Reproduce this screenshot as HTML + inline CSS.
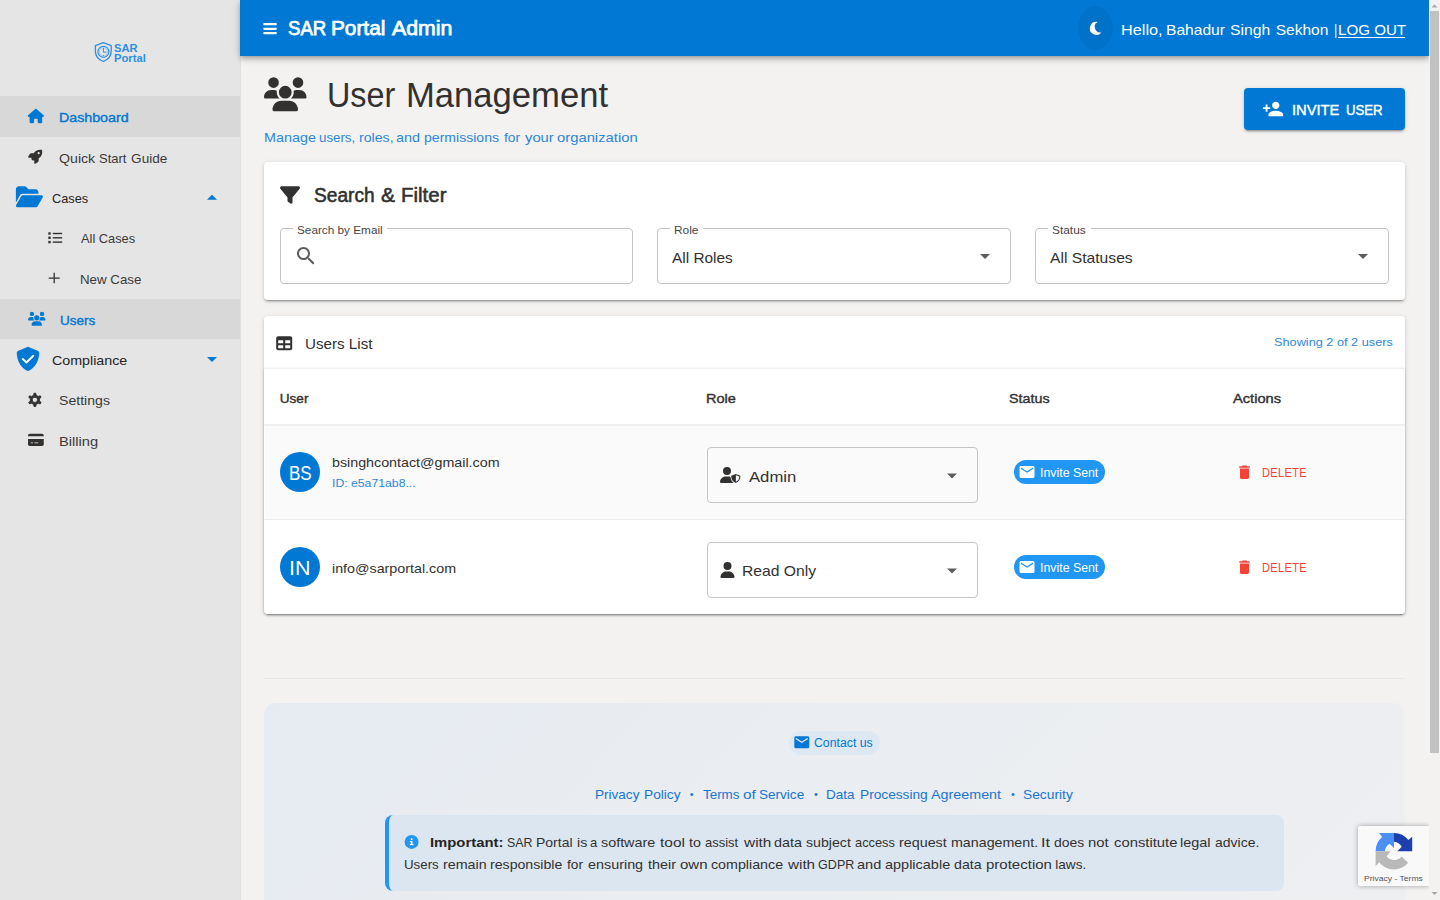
<!DOCTYPE html>
<html lang="en">
<head>
<meta charset="utf-8">
<title>SAR Portal Admin - User Management</title>
<style>
*{box-sizing:border-box;margin:0;padding:0}
html,body{width:1440px;height:900px;overflow:hidden}
body{position:relative;background:#f3f2f1;font-family:"Liberation Sans",sans-serif;color:#323130;font-size:13.58px}
.abs{position:absolute}
.ln{position:absolute;left:0;top:0;line-height:1}
.t{position:absolute;white-space:nowrap;line-height:1;transform-origin:0 0}
svg{position:absolute;display:block;overflow:visible}
a{color:inherit;text-decoration:none}

/* sidebar */
#side{position:absolute;left:0;top:0;width:241px;height:900px;background:#e5e5e5;border-right:1px solid #e1e1e1}
.hl{position:absolute;left:0;width:240px;height:40.6px;background:#d8d8d8}
.nav{font-size:13.58px;color:#3b3a39}
.navb{font-size:13.58px;color:#0078d4;-webkit-text-stroke:.4px #0078d4}
.navg{font-size:13.58px;color:#252423}

/* header */
#bar{position:absolute;left:240px;top:0;width:1189px;height:56px;background:#0078d4;box-shadow:0 2px 4px -1px rgba(0,0,0,.2),0 4px 5px 0 rgba(0,0,0,.14),0 1px 10px 0 rgba(0,0,0,.12)}
#moonbg{position:absolute;left:1078px;top:6px;width:35px;height:44px;border-radius:50%;background:rgba(0,0,0,.045)}

/* cards */
.card{position:absolute;background:#fff;border-radius:4px;box-shadow:0 3px 1px -2px rgba(0,0,0,.2),0 2px 2px 0 rgba(0,0,0,.14),0 1px 5px 0 rgba(0,0,0,.12)}
.field{position:absolute;top:228px;height:56px;border:1px solid #c4c4c4;border-radius:4px;background:#fff}
.notch{position:absolute;top:227px;height:3px;background:#fff}
.lb{font-size:11.64px;color:#484644}
.val{font-size:15.52px;color:#323130}
.th{font-size:13.58px;color:#323130;-webkit-text-stroke:.4px #323130}
.sel{position:absolute;left:707px;width:271px;height:56px;border:1px solid #c4c4c4;border-radius:4px}
.av{position:absolute;left:280px;width:40px;height:40px;border-radius:50%;background:#0078d4}
.chip{position:absolute;left:1014px;width:91px;height:24px;border-radius:12px;background:#2196f3}
.hr{position:absolute;height:1px;background:#e7e6e5}
.blue{color:#2e87d9}
.link{font-size:13.58px;color:#1976d2}
.dot{font-size:11px;color:#1976d2}
/*AUTO*/
#lg1{left:113.83px;top:43px;transform:scaleX(0.9696)}
#lg2{left:113.83px;top:53px;transform:scaleX(0.9742)}
#n1{left:59.45px;top:111px;transform:scaleX(1.0477)}
#n3{left:51.56px;top:192px;transform:scaleX(0.9378)}
#n4{left:80.50px;top:232px;transform:scaleX(0.9439)}
#n5{left:79.52px;top:273px;transform:scaleX(0.9803)}
#n6{left:59.51px;top:314px;transform:scaleX(0.9941)}
#n7{left:52.25px;top:354px;transform:scaleX(1.0500)}
#n8{left:59.46px;top:394px;transform:scaleX(1.0383)}
#n9{left:59.42px;top:435px;transform:scaleX(1.0824)}
#h3{left:1337.53px;top:22px;transform:scaleX(0.9750)}
#l1{left:296.99px;top:224px;transform:scaleX(1.0120)}
#l2{left:674.48px;top:224px;transform:scaleX(1.0227)}
#l3{left:1051.98px;top:224px;transform:scaleX(1.0234)}
#v1{left:672.00px;top:250px;transform:scaleX(0.9918)}
#v2{left:1049.50px;top:250px;transform:scaleX(1.0093)}
#ul{left:304.52px;top:336px;transform:scaleX(0.9779)}
#sh{left:1274.11px;top:336px;transform:scaleX(1.0944)}
#th1{left:279.75px;top:392px;transform:scaleX(1.0000)}
#th2{left:705.68px;top:392px;transform:scaleX(1.0673)}
#th3{left:1009.45px;top:392px;transform:scaleX(1.0541)}
#th4{left:1233.00px;top:392px;transform:scaleX(1.0795)}
#a1{left:288.64px;top:464px;transform:scaleX(0.8783)}
#a2{left:289.19px;top:559px;transform:scaleX(1.1063)}
#e1{left:332.15px;top:456px;transform:scaleX(1.0506)}
#i1{left:332.15px;top:477px;transform:scaleX(1.0519)}
#e2{left:332.15px;top:562px;transform:scaleX(1.0517)}
#r1{left:749.00px;top:469px;transform:scaleX(1.0744)}
#r2{left:741.99px;top:563px;transform:scaleX(1.0104)}
#c1{left:1039.77px;top:467px;transform:scaleX(0.9784)}
#c2{left:1039.77px;top:562px;transform:scaleX(0.9784)}
#d1{left:1261.93px;top:467px;transform:scaleX(0.8700)}
#d2{left:1261.93px;top:562px;transform:scaleX(0.8700)}
#cu{left:814.03px;top:737px;transform:scaleX(0.9746)}
#f4{left:1022.99px;top:788px;transform:scaleX(1.0146)}
#im{left:429.91px;top:836px;transform:scaleX(1.0923)}
#rc{left:1364.23px;top:875px;transform:scaleX(1.0698)}
#psw0{left:263.94px;top:131px;transform:scaleX(1.0574)}
#psw1{left:319.02px;top:131px;transform:scaleX(0.9771)}
#psw2{left:358.66px;top:131px;transform:scaleX(1.0419)}
#psw3{left:395.94px;top:131px;transform:scaleX(1.0571)}
#psw4{left:424.16px;top:131px;transform:scaleX(1.0352)}
#psw5{left:503.80px;top:131px;transform:scaleX(1.0125)}
#psw6{left:525.00px;top:131px;transform:scaleX(1.0885)}
#psw7{left:556.91px;top:131px;transform:scaleX(1.0903)}
#p1w0{left:507.09px;top:836px;transform:scaleX(0.9115)}
#p1w1{left:536.47px;top:836px;transform:scaleX(1.0294)}
#p1w2{left:576.75px;top:836px;transform:scaleX(1.0500)}
#p1w3{left:590.23px;top:836px;transform:scaleX(0.9667)}
#p1w4{left:601.14px;top:836px;transform:scaleX(1.0560)}
#p1w5{left:660.30px;top:836px;transform:scaleX(1.1381)}
#p1w6{left:689.20px;top:836px;transform:scaleX(1.0545)}
#p1w7{left:705.35px;top:836px;transform:scaleX(0.9529)}
#p1w8{left:744.20px;top:836px;transform:scaleX(1.1348)}
#p1w9{left:774.24px;top:836px;transform:scaleX(1.0560)}
#p1w10{left:805.96px;top:836px;transform:scaleX(1.0429)}
#p1w11{left:855.36px;top:836px;transform:scaleX(0.9439)}
#p1w12{left:899.25px;top:836px;transform:scaleX(1.0545)}
#p1w13{left:950.95px;top:836px;transform:scaleX(1.0494)}
#p1w14{left:1041.30px;top:836px;transform:scaleX(1.2000)}
#p1w15{left:1053.97px;top:836px;transform:scaleX(1.0250)}
#p1w16{left:1088.41px;top:836px;transform:scaleX(1.0944)}
#p1w17{left:1113.61px;top:836px;transform:scaleX(1.0911)}
#p1w18{left:1180.24px;top:836px;transform:scaleX(1.0630)}
#p1w19{left:1214.77px;top:836px;transform:scaleX(1.0293)}
#p2w0{left:404.02px;top:858px;transform:scaleX(0.9794)}
#p2w1{left:442.65px;top:858px;transform:scaleX(1.0525)}
#p2w2{left:490.16px;top:858px;transform:scaleX(1.0412)}
#p2w3{left:567.20px;top:858px;transform:scaleX(1.0062)}
#p2w4{left:587.74px;top:858px;transform:scaleX(1.0580)}
#p2w5{left:647.50px;top:858px;transform:scaleX(1.0577)}
#p2w6{left:679.70px;top:858px;transform:scaleX(1.1043)}
#p2w7{left:710.65px;top:858px;transform:scaleX(1.0493)}
#p2w8{left:787.50px;top:858px;transform:scaleX(1.1217)}
#p2w9{left:817.77px;top:858px;transform:scaleX(0.9270)}
#p2w10{left:857.23px;top:858px;transform:scaleX(1.0714)}
#p2w11{left:885.23px;top:858px;transform:scaleX(1.0661)}
#p2w12{left:953.66px;top:858px;transform:scaleX(1.0440)}
#p2w13{left:985.59px;top:858px;transform:scaleX(1.1052)}
#p2w14{left:1055.30px;top:858px;transform:scaleX(1.0000)}
#h1w0{left:287.80px;top:19px;transform:scaleX(0.9539)}
#h1w1{left:331.43px;top:19px;transform:scaleX(1.0663)}
#h1w2{left:391.90px;top:19px;transform:scaleX(1.0909)}
#h2w0{left:1120.55px;top:22px;transform:scaleX(1.0486)}
#h2w1{left:1166.29px;top:22px;transform:scaleX(1.0053)}
#h2w2{left:1230.49px;top:22px;transform:scaleX(1.0132)}
#h2w3{left:1275.70px;top:22px;transform:scaleX(1.0000)}
#h2w4{left:1334.20px;top:22px;transform:scaleX(0.8000)}
#ptw0{left:327.19px;top:78px;transform:scaleX(0.9362)}
#ptw1{left:406.19px;top:78px;transform:scaleX(1.0035)}
#sfw0{left:313.61px;top:186px;transform:scaleX(0.9858)}
#sfw1{left:380.52px;top:186px;transform:scaleX(1.0833)}
#sfw2{left:401.35px;top:186px;transform:scaleX(1.0548)}
#invtw0{left:1292.15px;top:102px;transform:scaleX(0.9469)}
#invtw1{left:1345.95px;top:102px;transform:scaleX(0.8500)}
#n2w0{left:59.36px;top:152px;transform:scaleX(1.0424)}
#n2w1{left:99.04px;top:152px;transform:scaleX(0.9571)}
#n2w2{left:131.10px;top:152px;transform:scaleX(1.0000)}
#f1w0{left:595.30px;top:788px;transform:scaleX(0.9977)}
#f1w1{left:643.69px;top:788px;transform:scaleX(1.0086)}
#f2w0{left:702.50px;top:788px;transform:scaleX(0.9861)}
#f2w1{left:742.57px;top:788px;transform:scaleX(1.1300)}
#f2w2{left:759.30px;top:788px;transform:scaleX(0.9977)}
#f3w0{left:825.91px;top:788px;transform:scaleX(0.9929)}
#f3w1{left:859.59px;top:788px;transform:scaleX(1.0077)}
#f3w2{left:931.40px;top:788px;transform:scaleX(1.0545)}
/*ENDAUTO*/
</style>
</head>
<body>

<!-- ============ SIDEBAR ============ -->
<div id="side">
  <div class="hl" style="top:96px"></div>
  <div class="hl" style="top:298.6px"></div>

  <!-- logo text -->
  <span class="t" id="lg1" style="font-size:11.5px;font-weight:bold;color:#2d8fe3">SAR</span>
  <span class="t" id="lg2" style="font-size:11.5px;font-weight:bold;color:#2d8fe3">Portal</span>

  <span class="t navb" id="n1">Dashboard</span>
  <span class="ln nav" id="n2"><span class="t" id="n2w0">Quick</span> <span class="t" id="n2w1">Start</span> <span class="t" id="n2w2">Guide</span></span>
  <span class="t navg" id="n3">Cases</span>
  <span class="t nav" id="n4">All Cases</span>
  <span class="t nav" id="n5">New Case</span>
  <span class="t navb" id="n6">Users</span>
  <span class="t navg" id="n7">Compliance</span>
  <span class="t nav" id="n8">Settings</span>
  <span class="t nav" id="n9">Billing</span>
</div>

<!-- ============ HEADER ============ -->
<div id="bar"></div>
<div id="moonbg"></div>
<span class="ln" id="h1" style="font-size:19.5px;color:#fff;-webkit-text-stroke:.75px #fff"><span class="t" id="h1w0">SAR</span> <span class="t" id="h1w1">Portal</span> <span class="t" id="h1w2">Admin</span></span>
<span class="ln" id="h2" style="font-size:15.52px;color:#fff"><span class="t" id="h2w0">Hello,</span> <span class="t" id="h2w1">Bahadur</span> <span class="t" id="h2w2">Singh</span> <span class="t" id="h2w3">Sekhon</span> <span class="t" id="h2w4">|</span></span>
<a class="t" id="h3" style="font-size:15.52px;color:#fff">LOG OUT</a>

<div class="abs" style="left:1338px;top:37px;width:67px;height:1px;background:#fff"></div>

<!-- ============ PAGE TITLE ============ -->
<h1 class="ln" id="pt" style="font-size:34.5px;font-weight:normal;color:#323130"><span class="t" id="ptw0">User</span> <span class="t" id="ptw1">Management</span></h1>
<p class="ln blue" id="ps" style="font-size:13.58px"><span class="t" id="psw0">Manage</span> <span class="t" id="psw1">users,</span> <span class="t" id="psw2">roles,</span> <span class="t" id="psw3">and</span> <span class="t" id="psw4">permissions</span> <span class="t" id="psw5">for</span> <span class="t" id="psw6">your</span> <span class="t" id="psw7">organization</span></p>

<div class="abs" id="inv" style="left:1244px;top:88px;width:161px;height:42px;border-radius:4px;background:#0078d4;box-shadow:0 3px 1px -2px rgba(0,0,0,.2),0 2px 2px 0 rgba(0,0,0,.14),0 1px 5px 0 rgba(0,0,0,.12)"></div>
<span class="ln" id="invt" style="font-size:15.52px;color:#fff;-webkit-text-stroke:.45px #fff"><span class="t" id="invtw0">INVITE</span> <span class="t" id="invtw1">USER</span></span>

<!-- ============ SEARCH & FILTER ============ -->
<div class="card" style="left:264px;top:162px;width:1141px;height:138px"></div>
<h2 class="ln" id="sf" style="font-size:19.4px;font-weight:normal;color:#323130;-webkit-text-stroke:.55px #323130"><span class="t" id="sfw0">Search</span> <span class="t" id="sfw1">&amp;</span> <span class="t" id="sfw2">Filter</span></h2>

<div class="field" style="left:280px;width:353px"></div>
<div class="field" style="left:657px;width:354px"></div>
<div class="field" style="left:1035px;width:354px"></div>
<div class="notch" style="left:293px;width:94px"></div>
<div class="notch" style="left:670px;width:33px"></div>
<div class="notch" style="left:1048px;width:43px"></div>
<label class="t lb" id="l1">Search by Email</label>
<label class="t lb" id="l2">Role</label>
<label class="t lb" id="l3">Status</label>
<span class="t val" id="v1">All Roles</span>
<span class="t val" id="v2">All Statuses</span>

<!-- ============ USERS LIST ============ -->
<div class="card" style="left:264px;top:316px;width:1141px;height:298px"></div>
<div class="card" style="left:264px;top:369px;width:1141px;height:245px;border-radius:0 0 4px 4px;box-shadow:0 0 3px rgba(0,0,0,.18)"></div>
<div class="abs" style="left:265px;top:426px;width:1140px;height:93px;background:#fafafa"></div>
<div class="hr" style="left:264px;top:424px;width:1141px;height:2px;background:#f0f0f0"></div>
<div class="hr" style="left:264px;top:519px;width:1141px;background:#ededed"></div>

<h3 class="t" id="ul" style="font-size:15.52px;font-weight:normal;color:#323130">Users List</h3>
<span class="t blue" id="sh" style="font-size:11.64px">Showing 2 of 2 users</span>

<span class="t th" id="th1">User</span>
<span class="t th" id="th2">Role</span>
<span class="t th" id="th3">Status</span>
<span class="t th" id="th4">Actions</span>

<!-- row 1 -->
<div class="av" style="top:452px"></div>
<span class="t" id="a1" style="font-size:19.4px;color:#fff">BS</span>
<span class="t" id="e1" style="font-size:13.58px;color:#323130">bsinghcontact@gmail.com</span>
<span class="t blue" id="i1" style="font-size:11.64px">ID: e5a71ab8...</span>
<div class="sel" style="top:447px"></div>
<span class="t val" id="r1">Admin</span>
<div class="chip" style="top:460px"></div>
<span class="t" id="c1" style="font-size:12.61px;color:#fff">Invite Sent</span>
<span class="t" id="d1" style="font-size:12.61px;color:#f44336;letter-spacing:.45px">DELETE</span>

<!-- row 2 -->
<div class="av" style="top:547px"></div>
<span class="t" id="a2" style="font-size:19.4px;color:#fff">IN</span>
<span class="t" id="e2" style="font-size:13.58px;color:#323130">info@sarportal.com</span>
<div class="sel" style="top:542px;background:#fff"></div>
<span class="t val" id="r2">Read Only</span>
<div class="chip" style="top:555px"></div>
<span class="t" id="c2" style="font-size:12.61px;color:#fff">Invite Sent</span>
<span class="t" id="d2" style="font-size:12.61px;color:#f44336;letter-spacing:.45px">DELETE</span>

<!-- ============ FOOTER ============ -->
<div class="hr" style="left:264px;top:678px;width:1141px;background:#e8e7e6"></div>
<div class="abs" id="foot" style="left:264px;top:703px;width:1141px;height:220px;border-radius:12px;background:linear-gradient(135deg,#e6ebf1 0%,#eaedf1 45%,#eeeff1 100%)"></div>
<div class="abs" style="left:789px;top:731px;width:91px;height:24px;border-radius:12px;background:#dde8f3"></div>
<a class="t" id="cu" style="font-size:12.61px;color:#0078d4">Contact us</a>

<a class="ln link" id="f1"><span class="t" id="f1w0">Privacy</span> <span class="t" id="f1w1">Policy</span></a>
<span class="t dot" style="left:689.8px;top:789px">•</span>
<a class="ln link" id="f2"><span class="t" id="f2w0">Terms</span> <span class="t" id="f2w1">of</span> <span class="t" id="f2w2">Service</span></a>
<span class="t dot" style="left:814.1px;top:789px">•</span>
<a class="ln link" id="f3"><span class="t" id="f3w0">Data</span> <span class="t" id="f3w1">Processing</span> <span class="t" id="f3w2">Agreement</span></a>
<span class="t dot" style="left:1011.1px;top:789px">•</span>
<a class="t link" id="f4">Security</a>

<div class="abs" style="left:385px;top:815px;width:899px;height:76px;border-radius:8px;background:#dce6f1;border-left:4px solid #2196f3"></div>
<span class="t" id="im" style="font-size:13.58px;font-weight:bold;color:#252423">Important:</span>
<p class="ln" id="p1" style="font-size:13.58px;color:#323130"><span class="t" id="p1w0">SAR</span> <span class="t" id="p1w1">Portal</span> <span class="t" id="p1w2">is</span> <span class="t" id="p1w3">a</span> <span class="t" id="p1w4">software</span> <span class="t" id="p1w5">tool</span> <span class="t" id="p1w6">to</span> <span class="t" id="p1w7">assist</span> <span class="t" id="p1w8">with</span> <span class="t" id="p1w9">data</span> <span class="t" id="p1w10">subject</span> <span class="t" id="p1w11">access</span> <span class="t" id="p1w12">request</span> <span class="t" id="p1w13">management.</span> <span class="t" id="p1w14">It</span> <span class="t" id="p1w15">does</span> <span class="t" id="p1w16">not</span> <span class="t" id="p1w17">constitute</span> <span class="t" id="p1w18">legal</span> <span class="t" id="p1w19">advice.</span></p>
<p class="ln" id="p2" style="font-size:13.58px;color:#323130"><span class="t" id="p2w0">Users</span> <span class="t" id="p2w1">remain</span> <span class="t" id="p2w2">responsible</span> <span class="t" id="p2w3">for</span> <span class="t" id="p2w4">ensuring</span> <span class="t" id="p2w5">their</span> <span class="t" id="p2w6">own</span> <span class="t" id="p2w7">compliance</span> <span class="t" id="p2w8">with</span> <span class="t" id="p2w9">GDPR</span> <span class="t" id="p2w10">and</span> <span class="t" id="p2w11">applicable</span> <span class="t" id="p2w12">data</span> <span class="t" id="p2w13">protection</span> <span class="t" id="p2w14">laws.</span></p>

<!-- recaptcha badge -->
<div class="abs" style="left:1358px;top:826px;width:71px;height:60px;background:#f9f9f9;border-radius:2px 0 0 2px;box-shadow:0 0 5px rgba(0,0,0,.35)"></div>
<span class="t" id="rc" style="font-size:8px;color:#555">Privacy - Terms</span>

<!-- scrollbar -->
<div class="abs" style="left:1429px;top:0;width:11px;height:900px;background:#f3f2f1"></div>
<div class="abs" style="left:1430px;top:11px;width:9px;height:742px;background:#c1c1c1"></div>

<!-- ============ ICONS ============ -->
<svg id="icons" width="1440" height="900" viewBox="0 0 1440 900" style="left:0;top:0;pointer-events:none">
<defs>
  <path id="p-users" d="M144 0a80 80 0 1 1 0 160A80 80 0 1 1 144 0zM512 0a80 80 0 1 1 0 160A80 80 0 1 1 512 0zM0 298.700C0 239.800 47.800 192 106.700 192h42.700c15.900 0 31 3.500 44.600 9.700c-1.300 7.200-1.900 14.700-1.900 22.300c0 38.200 16.800 72.500 43.300 96c-.2 0-.4 0-.7 0H21.300C9.600 320 0 310.400 0 298.700zM405.300 320c-.2 0-.4 0-.7 0c26.600-23.500 43.300-57.800 43.300-96c0-7.600-.7-15-1.900-22.300c13.600-6.300 28.700-9.700 44.600-9.700h42.700C592.200 192 640 239.800 640 298.700c0 11.800-9.600 21.300-21.300 21.300H405.300zM224 224a96 96 0 1 1 192 0 96 96 0 1 1 -192 0zM128 485.300C128 411.700 187.700 352 261.300 352H378.700C452.300 352 512 411.700 512 485.300c0 14.700-11.900 26.700-26.700 26.700H154.700c-14.700 0-26.700-11.900-26.700-26.700z"/>
  <path id="p-mail" d="M20 4H4c-1.100 0-1.990.9-1.990 2L2 18c0 1.100.9 2 2 2h16c1.100 0 2-.9 2-2V6c0-1.100-.9-2-2-2zm0 4l-8 5-8-5V6l8 5 8-5v2z"/>
  <path id="p-del" d="M6 19c0 1.100.9 2 2 2h8c1.100 0 2-.9 2-2V7H6v12zM19 4h-3.500l-1-1h-5l-1 1H5v2h14V4z"/>
  <path id="p-dd" d="M7 10l5 5 5-5z"/>
  <path id="p-user" d="M224 256A128 128 0 1 0 224 0a128 128 0 1 0 0 256zm-45.700 48C79.800 304 0 383.800 0 482.300C0 498.700 13.300 512 29.700 512H418.300c16.400 0 29.700-13.300 29.700-29.700C448 383.800 368.200 304 269.700 304H178.300z"/>
</defs>

<!-- logo shield + clock -->
<g fill="none" stroke="#2d8fe3" stroke-width="1.300" stroke-linejoin="round" stroke-linecap="round">
  <path d="M103.300 42.700 L111.200 45.700 V51.500 C111.200 56.300 108 59.600 103.300 61.500 C98.600 59.600 95.400 56.300 95.400 51.500 V45.700 Z"/>
  <circle cx="103.400" cy="51.800" r="5.500" stroke-width="1.200"/>
  <circle cx="103.400" cy="51.800" r="4.100" stroke-width=".5" opacity=".55"/>
  <path d="M103.400 48.400 V52.200 H105.900" stroke-width="1"/>
</g>
<circle cx="103.400" cy="55.500" r=".6" fill="#2d8fe3"/>

<!-- home -->
<svg x="27.800" y="108.800" width="16.200" height="14.400" viewBox="0 0 576 512"><path fill="#0078d4" d="M575.800 255.500c0 18-15 32.100-32 32.100h-32l.7 160.200c0 2.700-.2 5.400-.5 8.100V472c0 22.100-17.900 40-40 40H456c-1.100 0-2.200 0-3.300-.1c-1.400 .1-2.800 .1-4.200 .1H416 392c-22.100 0-40-17.900-40-40V448 384c0-17.700-14.300-32-32-32H256c-17.700 0-32 14.300-32 32v64 24c0 22.100-17.900 40-40 40H160 128.100c-1.500 0-3-.1-4.500-.2c-1.200 .1-2.400 .2-3.600 .2H104c-22.100 0-40-17.900-40-40V360c0-.9 0-1.900 .1-2.800V287.600H32c-18 0-32-14-32-32.100c0-9 3-17 10-24L266.400 8c7-7 15-8 22-8s15 2 21 7L564.800 231.500c8 7 12 15 11 24z"/></svg>

<!-- rocket -->
<svg x="28.100" y="149.700" width="14.100" height="14.100" viewBox="0 0 512 512"><path fill="#323130" d="M156.600 384.900L125.700 354c-8.500-8.500-11.500-20.800-7.700-32.200c3-8.900 7-20.500 11.800-33.800L24 288c-8.600 0-16.600-4.600-20.900-12.100s-4.200-16.700 .2-24.100l52.500-88.500c13-21.900 36.500-35.300 61.900-35.300l82.300 0c2.400-4 4.800-7.700 7.200-11.300C289.100-4.100 411.100-8.100 483.900 5.300c11.600 2.100 20.600 11.200 22.800 22.800c13.400 72.900 9.300 194.800-111.400 276.700c-3.500 2.400-7.300 4.800-11.300 7.200v82.300c0 25.400-13.400 49-35.300 61.900l-88.500 52.500c-7.400 4.400-16.600 4.500-24.100 .2s-12.100-12.200-12.100-20.900V380.800c-14.100 4.900-26.400 8.900-35.700 11.900c-11.200 3.600-23.400 .5-31.800-7.800zM384 168a40 40 0 1 0 0-80 40 40 0 1 0 0 80z"/></svg>

<!-- folder open -->
<svg x="15.900" y="184.800" width="27" height="24" viewBox="0 0 576 512"><path fill="#0078d4" d="M88.700 223.800L0 375.800V96C0 60.700 28.700 32 64 32H181.500c17 0 33.300 6.700 45.300 18.700l26.500 26.500c12 12 28.300 18.700 45.300 18.700H416c35.300 0 64 28.700 64 64v32H144c-22.800 0-43.800 12.100-55.300 31.800zm27.600 16.100C122.100 230 132.600 224 144 224H544c11.500 0 22 6.100 27.700 16.100s5.700 22.200-.1 32.100l-112 192C453.900 474 443.400 480 432 480H32c-11.500 0-22-6.100-27.700-16.100s-5.700-22.200 .1-32.100l112-192z"/></svg>
<path d="M207 199.700 L212 194.700 L217 199.700 Z" fill="#0078d4"/>

<!-- list -->
<g fill="#323130">
  <rect x="48.300" y="232.300" width="2.400" height="2.400"/><rect x="52.800" y="232.800" width="9.400" height="1.400"/>
  <rect x="48.300" y="236.600" width="2.400" height="2.400"/><rect x="52.800" y="237.100" width="9.400" height="1.400"/>
  <rect x="48.300" y="240.900" width="2.400" height="2.400"/><rect x="52.800" y="241.400" width="9.400" height="1.400"/>
</g>
<!-- plus -->
<path d="M54.200 272.800 V283.300 M48.700 278.050 H59.700" stroke="#323130" stroke-width="1.300" fill="none"/>

<!-- users (nav) -->
<svg x="28" y="311.700" width="17.500" height="14" viewBox="0 0 640 512"><use href="#p-users" fill="#0078d4"/></svg>

<!-- shield check -->
<path d="M28 346.800 L38.200 351.100 Q39.400 351.700 39.250 353.400 C38.800 361.800 34.200 368.400 28.700 370.800 Q28 371.100 27.300 370.800 C21.800 368.400 17.200 361.800 16.750 353.400 Q16.600 351.700 17.800 351.100 Z" fill="#0078d4"/>
<path d="M22.700 358.900 L26.400 362.500 L33.300 355.700" fill="none" stroke="#fff" stroke-width="1.900" stroke-linecap="round" stroke-linejoin="round"/>
<path d="M207 357 L217 357 L212 362 Z" fill="#0078d4"/>

<!-- gear -->
<path fill="#323130" fill-rule="evenodd" stroke="#323130" stroke-width=".9" stroke-linejoin="round" d="M33.64 395.32 L33.99 393.21 L35.81 393.21 L36.16 395.32 L38.19 396.49 L40.19 395.74 L41.10 397.32 L39.45 398.68 L39.45 401.02 L41.10 402.38 L40.19 403.96 L38.19 403.21 L36.16 404.38 L35.81 406.49 L33.99 406.49 L33.64 404.38 L31.61 403.21 L29.61 403.96 L28.70 402.38 L30.35 401.02 L30.35 398.68 L28.70 397.32 L29.61 395.74 L31.61 396.49 Z M34.90 397.25 a2.6 2.6 0 1 0 0.001 0 Z"/>

<!-- credit card -->
<svg x="28" y="432.800" width="15.750" height="14" viewBox="0 0 576 512"><path fill="#323130" d="M64 32C28.700 32 0 60.700 0 96v32H576V96c0-35.300-28.700-64-64-64H64zM576 224H0V416c0 35.300 28.700 64 64 64H512c35.300 0 64-28.700 64-64V224zM112 352h64c8.800 0 16 7.200 16 16s-7.200 16-16 16H112c-8.800 0-16-7.200-16-16s7.200-16 16-16zm112 16c0-8.800 7.200-16 16-16H368c8.800 0 16 7.200 16 16s-7.200 16-16 16H240c-8.800 0-16-7.200-16-16z"/></svg>

<!-- header: bars, moon -->
<g fill="#fff"><rect x="263.200" y="23.050" width="13.700" height="2.300" rx="1.150"/><rect x="263.200" y="27.650" width="13.700" height="2.300" rx="1.150"/><rect x="263.200" y="32.050" width="13.700" height="2.300" rx="1.150"/></g>
<path fill="#fff" d="M1097.700 22 A6.470 6.470 0 1 0 1101.400 32.400 A5.590 5.590 0 0 1 1097.700 22 Z"/>

<!-- person add -->
<svg x="1262" y="98" width="22" height="22" viewBox="0 0 24 24"><path fill="#fff" d="M15 12c2.210 0 4-1.790 4-4s-1.790-4-4-4-4 1.790-4 4 1.790 4 4 4zm-9-2V7H4v3H1v2h3v3h2v-3h3v-2H6zm9 4c-2.670 0-8 1.340-8 4v2h16v-2c0-2.660-5.330-4-8-4z"/></svg>

<!-- title users -->
<svg x="264" y="77.300" width="42.500" height="34" viewBox="0 0 640 512"><use href="#p-users" fill="#323130"/></svg>

<!-- filter -->
<svg x="280" y="185" width="20" height="20" viewBox="0 0 512 512"><path fill="#323130" d="M3.900 54.900C10.500 40.900 24.500 32 40 32H472c15.500 0 29.500 8.900 36.100 22.900s4.600 30.500-5.200 42.500L320 320.900V448c0 12.100-6.800 23.200-17.700 28.600s-23.800 4.300-33.500-3l-64-48c-8.100-6-12.800-15.500-12.800-25.600V320.900L9 97.300C-.7 85.400-2.800 68.800 3.900 54.900z"/></svg>

<!-- search -->
<svg x="294" y="244" width="24" height="24" viewBox="0 0 24 24"><path fill="#605e5c" d="M15.500 14h-.79l-.28-.27C15.410 12.590 16 11.110 16 9.500 16 5.910 13.090 3 9.500 3S3 5.910 3 9.500 5.910 16 9.500 16c1.610 0 3.090-.59 4.230-1.570l.27.28v.79l5 4.990L20.490 19l-4.990-5zm-6 0C7.010 14 5 11.990 5 9.500S7.010 5 9.500 5 14 7.010 14 9.500 11.990 14 9.500 14z"/></svg>

<!-- dropdown arrows -->
<svg x="973" y="244" width="24" height="24" viewBox="0 0 24 24"><use href="#p-dd" fill="#605e5c"/></svg>
<svg x="1351" y="244" width="24" height="24" viewBox="0 0 24 24"><use href="#p-dd" fill="#605e5c"/></svg>
<svg x="940" y="463.500" width="24" height="24" viewBox="0 0 24 24"><use href="#p-dd" fill="#605e5c"/></svg>
<svg x="940" y="558.500" width="24" height="24" viewBox="0 0 24 24"><use href="#p-dd" fill="#605e5c"/></svg>

<!-- table icon -->
<svg x="276.200" y="335.200" width="16" height="16" viewBox="0 0 512 512"><path fill="#323130" d="M64 256V160H224v96H64zm0 64H224v96H64V320zm224 96V320H448v96H288zM448 256H288V160H448v96zM64 32C28.700 32 0 60.700 0 96V416c0 35.300 28.700 64 64 64H448c35.300 0 64-28.700 64-64V96c0-35.300-28.700-64-64-64H64z"/></svg>

<!-- admin (user-shield) -->
<svg x="720" y="467" width="14" height="16" viewBox="0 0 448 512"><use href="#p-user" fill="#323130"/></svg>
<path d="M735.800 474 L740.400 475.700 C740.500 479.300 738.900 481.700 735.800 482.900 C732.700 481.700 731.100 479.300 731.200 475.700 Z" fill="#323130" stroke="#fafafa" stroke-width="1.600" paint-order="stroke"/>
<path d="M735.900 475.200 L739.300 476.500 C739.300 479 738.100 480.800 735.900 481.700 Z" fill="#fafafa"/>
<!-- read only (user) -->
<svg x="720.500" y="562" width="14" height="16" viewBox="0 0 448 512"><use href="#p-user" fill="#323130"/></svg>

<!-- chip mails -->
<svg x="1018" y="463" width="18" height="18" viewBox="0 0 24 24"><use href="#p-mail" fill="#fff"/></svg>
<svg x="1018" y="558" width="18" height="18" viewBox="0 0 24 24"><use href="#p-mail" fill="#fff"/></svg>
<!-- delete -->
<svg x="1235.500" y="463.200" width="18" height="18" viewBox="0 0 24 24"><use href="#p-del" fill="#f44336"/></svg>
<svg x="1235.500" y="558.200" width="18" height="18" viewBox="0 0 24 24"><use href="#p-del" fill="#f44336"/></svg>

<!-- contact mail -->
<svg x="792.800" y="733.200" width="18" height="18" viewBox="0 0 24 24"><use href="#p-mail" fill="#0078d4"/></svg>

<!-- info -->
<circle cx="411.600" cy="841.900" r="7" fill="#2196f3"/>
<rect x="410.800" y="841.200" width="1.800" height="3.800" fill="#fff"/><rect x="409.900" y="841.200" width="1.800" height="1" fill="#fff"/><rect x="409.800" y="844.100" width="3.700" height="1" fill="#fff"/>
<circle cx="411.650" cy="839.150" r=".950" fill="#fff"/>

<!-- recaptcha logo -->
<g>
  <path d="M1394 832.900 A18.400 18.400 0 0 1 1408.400 840 L1412.200 836.700 V851.300 H1397.400 L1401.700 846.700 A9.500 9.500 0 0 0 1394 841.800 Z" fill="#1f3fae"/>
  <path d="M1394 832.900 H1379 L1382.100 836.900 A18.400 18.400 0 0 0 1375.600 851.300 H1384.900 A9.500 9.500 0 0 1 1389.500 843.800 L1394 847.900 Z" fill="#4c8ff5"/>
  <path d="M1375.600 851.300 H1390.500 L1386.700 856.400 A9.500 9.500 0 0 0 1401.700 856.400 L1408.100 862.800 A18.400 18.400 0 0 1 1379.200 862.300 L1375.600 866.300 Z" fill="#b9b9b9"/>
</g>

<!-- scrollbar arrows -->
<path d="M1431.500 7.500 L1434.500 4.500 L1437.500 7.500 Z" fill="#a8a8a8"/>
<path d="M1431.500 892 L1434.500 895 L1437.500 892 Z" fill="#a8a8a8"/>
</svg>

</body>
</html>
